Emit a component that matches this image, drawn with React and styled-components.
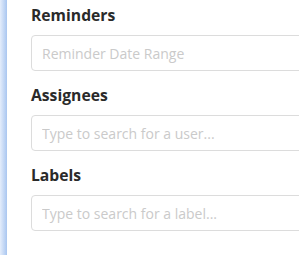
import React from "react";
import styled, { createGlobalStyle } from "styled-components";

const Global = createGlobalStyle`
  html, body { margin: 0; padding: 0; background: #fff; }
  body { font-family: "Open Sans", "Liberation Sans", sans-serif; }
`;

const Page = styled.div`
  display: flex;
  width: 299px;
  height: 255px;
  overflow: hidden;
  background: #fff;
`;

const Strip = styled.div`
  flex: 0 0 7px;
  background: linear-gradient(to right, #e4edfb, #a9c6f0);
  border-right: 1px solid #fff;
`;

const Form = styled.div`
  flex: 1;
  padding: 5px 0 0 23px;
  display: flex;
  flex-direction: column;
  gap: 14px;
  min-width: 0;
`;

const Field = styled.div`
  display: flex;
  flex-direction: column;
  gap: 10px;
`;

const Label = styled.label`
  font-size: 15.7px;
  line-height: 20px;
  font-weight: 700;
  color: #2a2a2a;
`;

const Input = styled.input`
  box-sizing: border-box;
  width: 320px;
  height: 36px;
  border: 1px solid #dcdcdc;
  border-radius: 4px;
  padding: 0 10px;
  font-family: "Open Sans", "Liberation Sans", sans-serif;
  font-size: 14px;
  color: #333;
  outline: none;
  &::placeholder { color: #cacaca; }
`;

export default function App() {
  return (
    <>
      <Global />
      <Page>
        <Strip />
        <Form>
          <Field>
            <Label>Reminders</Label>
            <Input placeholder="Reminder Date Range" />
          </Field>
          <Field>
            <Label>Assignees</Label>
            <Input placeholder="Type to search for a user..." />
          </Field>
          <Field>
            <Label>Labels</Label>
            <Input placeholder="Type to search for a label..." />
          </Field>
        </Form>
      </Page>
    </>
  );
}
